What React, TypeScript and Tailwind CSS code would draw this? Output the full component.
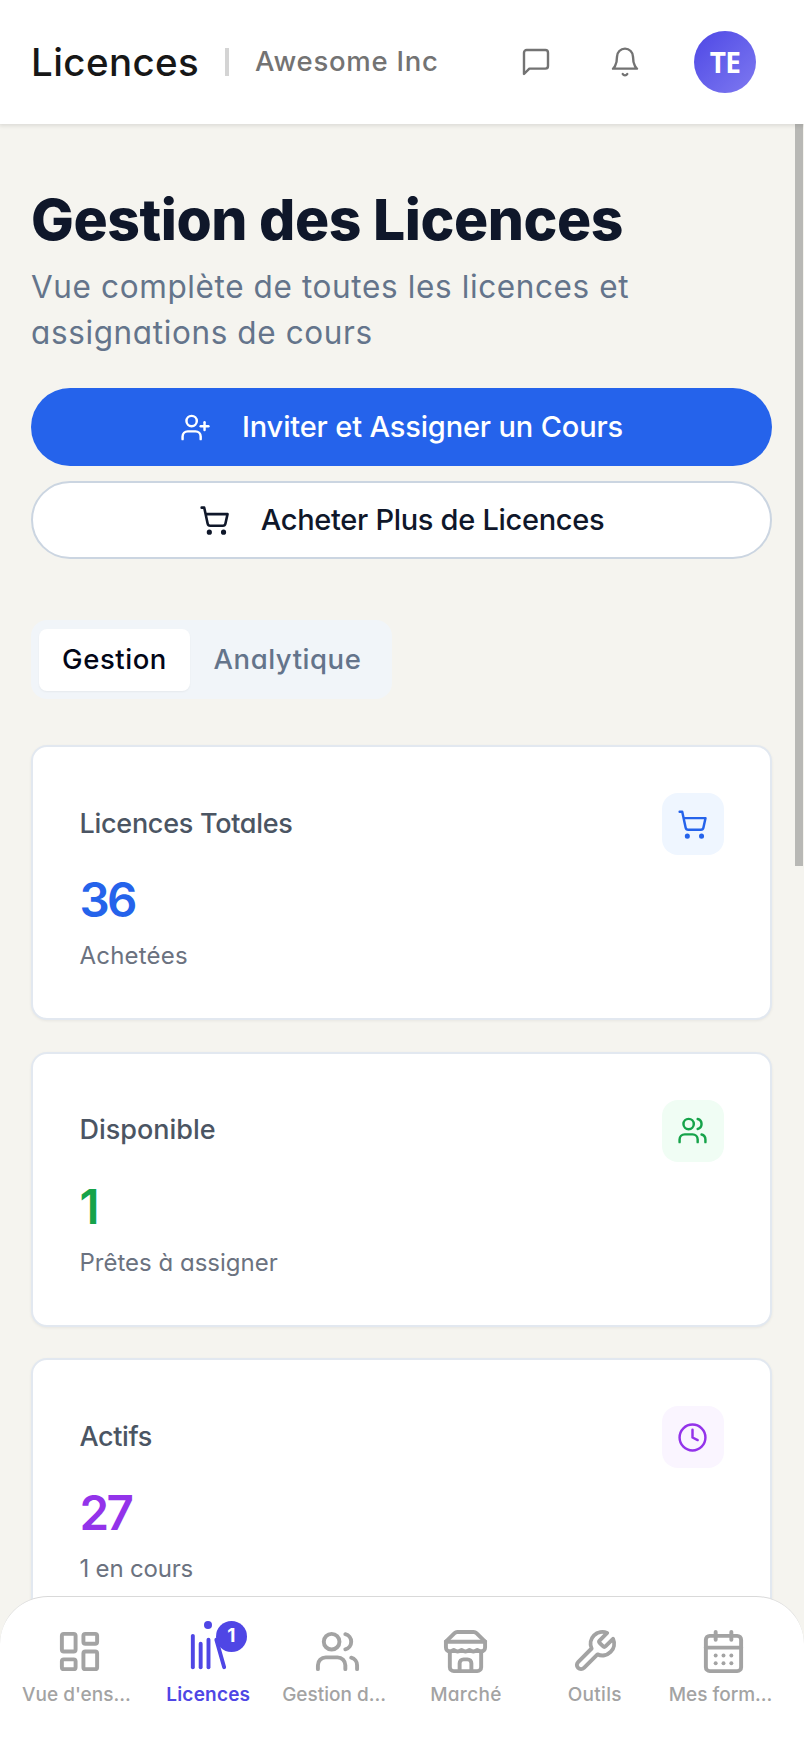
import type { ReactNode } from 'react';
import { CalendarDays, Clock, LayoutDashboard, Library, ShoppingCart, UserPlus, Users } from 'lucide-react';

interface IconProps {
  className?: string;
  strokeWidth?: number;
  children: ReactNode;
}

function StrokeIcon({ className, strokeWidth = 2, children }: IconProps) {
  return (
    <svg
      viewBox="0 0 24 24"
      fill="none"
      stroke="currentColor"
      strokeWidth={strokeWidth}
      strokeLinecap="round"
      strokeLinejoin="round"
      className={className}
    >
      {children}
    </svg>
  );
}

function Header() {
  return (
    <header className="relative z-10 flex h-[124px] shrink-0 items-center bg-white pl-[31px] shadow-[0_1px_4px_1px_rgba(0,0,0,0.1)]">
      <span className="w-[194px] pt-px text-[38.5px] font-medium tracking-[0.4px] text-neutral-900">Licences</span>
      <span className="h-7 w-1 bg-neutral-300" />
      <span className="ml-[26px] w-[265px] text-[27.5px] font-medium tracking-[0.75px] text-[#737373]">Awesome Inc</span>
      <StrokeIcon className="h-[32px] w-[32px] text-[#737373]" strokeWidth={1.8}>
        <path d="M21 15a2 2 0 0 1-2 2H7l-4 4V5a2 2 0 0 1 2-2h14a2 2 0 0 1 2 2z" />
      </StrokeIcon>
      <StrokeIcon className="ml-[57px] h-[32px] w-[32px] text-[#737373]" strokeWidth={1.8}>
        <path d="M6 8a6 6 0 0 1 12 0c0 7 3 9 3 9H3s3-2 3-9" />
        <path d="M10.3 21a1.94 1.94 0 0 0 3.4 0" />
      </StrokeIcon>
      <div className="ml-[53px] flex h-[62px] w-[62px] items-center justify-center rounded-full bg-linear-to-br from-[#4f46e5] to-[#7f78f0] font-['Open_Sans'] text-[28px] font-bold tracking-[-0.7px] text-white">
        TE
      </div>
    </header>
  );
}

interface StatProps {
  label: ReactNode;
  value: string;
  note: ReactNode;
  icon: ReactNode;
  tile: string;
  color: string;
}

function StatCard({ label, value, note, icon, tile, color }: StatProps) {
  return (
    <div className="h-[275px] shrink-0 rounded-2xl border-2 border-[#e2e8f0] bg-white pt-[46px] pr-[46.5px] pl-[46.5px] shadow-[0_1px_3px_rgba(0,0,0,0.06)]">
      <div className="flex items-center justify-between text-[27px] font-medium text-[#4b5563]">
        {label}
        <div className={`flex h-[62px] w-[62px] items-center justify-center rounded-2xl ${tile}`}>{icon}</div>
      </div>
      <div className={`mt-[15px] text-[47.5px] leading-[60px] font-semibold tracking-[-2.6px] ${color}`}>{value}</div>
      <div className="mt-[10px] text-[24px] leading-8 text-[#6b7280]">{note}</div>
    </div>
  );
}

interface NavItemProps {
  label: string;
  icon: ReactNode;
  active?: boolean;
  badge?: string;
}

function NavItem({ label, icon, active, badge }: NavItemProps) {
  return (
    <div className={`flex flex-1 flex-col items-center ${active ? 'text-[#4f46e5]' : 'text-[#a3a3a3]'}`}>
      <div className="relative">
        {icon}
        {active && <span className="absolute -top-[7px] left-[19px] h-2 w-2 rounded-full bg-[#4f46e5]" />}
        {badge && (
          <span className="absolute -top-[7px] left-[31px] flex h-[31px] w-[31px] items-center justify-center rounded-full bg-[#4f46e5] text-[19px] font-bold text-white">
            {badge}
          </span>
        )}
      </div>
      <span
        className={`mt-[6px] text-[19px] leading-7 whitespace-nowrap ${active ? 'font-semibold tracking-[0.2px]' : 'font-medium tracking-[0.3px]'} ${label.endsWith('…') ? 'pr-[6px] tracking-[0px]' : ''}`}
      >
        {label}
      </span>
    </div>
  );
}

function BottomNav() {
  return (
    <nav className="absolute inset-x-0 bottom-0 z-20 flex h-[142px] rounded-t-[48px] border-t border-[#d9d9d9] bg-white pt-[31px] pr-4 pl-[15px]">
      <NavItem label="Vue d'ens…" icon={<LayoutDashboard size={47} />} />
      <NavItem label="Licences" icon={<Library size={47} />} active badge="1" />
      <NavItem label="Gestion d…" icon={<Users size={47} />} />
      <NavItem
        label="Marché"
        icon={
          <StrokeIcon className="h-[47px] w-[47px]">
            <path d="m2 7 4.41-4.41A2 2 0 0 1 7.83 2h8.34a2 2 0 0 1 1.42.59L22 7" />
            <path d="M4 12v8a2 2 0 0 0 2 2h12a2 2 0 0 0 2-2v-8" />
            <path d="M15 22v-4a2 2 0 0 0-2-2h-2a2 2 0 0 0-2 2v4" />
            <path d="M2 7h20" />
            <path d="M22 7v3a2 2 0 0 1-2 2a2.7 2.7 0 0 1-1.59-.63.7.7 0 0 0-.82 0A2.7 2.7 0 0 1 16 12a2.7 2.7 0 0 1-1.59-.63.7.7 0 0 0-.82 0A2.7 2.7 0 0 1 12 12a2.7 2.7 0 0 1-1.59-.63.7.7 0 0 0-.82 0A2.7 2.7 0 0 1 8 12a2.7 2.7 0 0 1-1.59-.63.7.7 0 0 0-.82 0A2.7 2.7 0 0 1 4 12a2 2 0 0 1-2-2V7" />
          </StrokeIcon>
        }
      />
      <NavItem
        label="Outils"
        icon={
          <StrokeIcon className="h-[47px] w-[47px]">
            <path d="M14.7 6.3a1 1 0 0 0 0 1.4l1.6 1.6a1 1 0 0 0 1.4 0l3.77-3.77a6 6 0 0 1-7.94 7.94l-6.91 6.91a2.12 2.12 0 0 1-3-3l6.91-6.91a6 6 0 0 1 7.94-7.94l-3.76 3.76z" />
          </StrokeIcon>
        }
      />
      <NavItem label="Mes form…" icon={<CalendarDays size={47} />} />
    </nav>
  );
}

export default function App() {
  return (
    <div className="relative flex h-[1738px] w-[804px] flex-col overflow-hidden bg-[#f5f4ef] font-['Inter',sans-serif] [font-feature-settings:'cv11']">
      <Header />
      <main className="flex flex-1 flex-col pr-8 pl-[31px]">
        <h1 className="mt-[61px] text-[57px] leading-[70px] font-extrabold tracking-[-0.45px] text-[#0f172a]">Gestion des Licences</h1>
        <p className="mt-[9px] text-[31.5px] leading-[46px] tracking-[0.62px] text-[#64748b]">
          Vue complète de toutes les licences et
          <br />
          assignations de cours
        </p>
        <button className="mt-[32px] flex h-[78px] shrink-0 items-center justify-center gap-[31px] rounded-full bg-[#2563eb] text-[29px] font-medium tracking-[-0.15px] text-white">
          <UserPlus size={31} strokeWidth={1.9} />
          Inviter et Assigner un Cours
        </button>
        <button className="mt-[15px] flex h-[78px] shrink-0 items-center justify-center gap-[31px] rounded-full border-2 border-[#cbd5e1] bg-white text-[29px] font-medium tracking-[-0.3px] text-[#0f172a]">
          <ShoppingCart size={31} />
          Acheter Plus de Licences
        </button>
        <div className="mt-[61px] flex h-[79px] w-[361px] shrink-0 items-center rounded-2xl bg-[#f1f5f9] px-2 text-[27.5px] font-medium tracking-[0.55px]">
          <div className="flex h-[62px] w-[151px] items-center justify-center rounded-lg bg-white text-[#020617] shadow-[0_1px_2px_rgba(0,0,0,0.05)]">
            Gestion
          </div>
          <div className="flex-1 pl-[23.5px] text-[#64748b]">Analytique</div>
        </div>
        <div className="mt-[46px] flex flex-col gap-[31.6px]">
          <StatCard
            label={<span className="tracking-[-0.28px]">Licences Totales</span>}
            value="36"
            note={<span className="tracking-[0.2px]">Achetées</span>}
            icon={<ShoppingCart size={31} strokeWidth={1.9} />}
            tile="bg-[#eff6ff] text-[#2563eb]"
            color="text-[#2563eb]"
          />
          <StatCard
            label="Disponible"
            value="1"
            note="Prêtes à assigner"
            icon={<Users size={31} strokeWidth={1.9} />}
            tile="bg-[#f0fdf4] text-[#16a34a]"
            color="text-[#16a34a]"
          />
          <StatCard
            label={<span className="tracking-[-0.4px]">Actifs</span>}
            value="27"
            note={<span className="tracking-[-0.2px]">1 en cours</span>}
            icon={<Clock size={31} strokeWidth={1.9} />}
            tile="bg-[#faf5ff] text-[#9333ea]"
            color="text-[#9333ea]"
          />
        </div>
      </main>
      <div className="absolute top-[124px] left-[795px] h-[742px] w-2 bg-[#b8b8b5]" />
      <BottomNav />
    </div>
  );
}
